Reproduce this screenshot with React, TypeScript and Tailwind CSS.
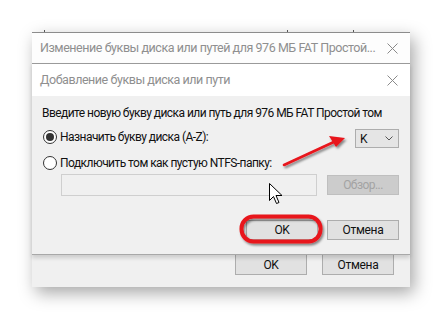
import React from "react";

const font = { fontFamily: 'Roboto, "Noto Sans", sans-serif' };

function CloseX() {
  return (
    <svg width="11" height="11" viewBox="0 0 11 11" className="shrink-0">
      <path d="M0.5 0.5 L10.5 10.5 M10.5 0.5 L0.5 10.5" stroke="#8a8a8a" strokeWidth="1" />
    </svg>
  );
}

function Radio({ checked }: { checked?: boolean }) {
  return (
    <div className="w-[14px] h-[14px] rounded-full border border-[#333] bg-white flex items-center justify-center shrink-0">
      {checked && <div className="w-[8px] h-[8px] rounded-full bg-[#333]" />}
    </div>
  );
}

function Btn({ children, className = "" }: { children: React.ReactNode; className?: string }) {
  return (
    <div
      className={
        "w-[72px] h-[20px] bg-[#e1e1e1] border border-[#adadad] flex items-center justify-center text-[12px] text-[#111] tracking-[-0.3px] " +
        className
      }
    >
      {children}
    </div>
  );
}

export default function App() {
  return (
    <div className="relative w-[442px] h-[319px] bg-white overflow-hidden" style={font}>
      <div className="pt-[32px] pl-[32px]">
        <div className="relative w-[378px] h-[255px] bg-[#f0f0f0] border-t border-[#8c8c8c] shadow-[4px_6px_16px_rgba(0,0,0,0.35)] flex flex-col">
          <div className="absolute -top-[3px] left-[12px] w-px h-[2px] bg-[#555]" />
          <div className="absolute -top-[3px] left-[255px] w-px h-[2px] bg-[#555]" />
          <div className="absolute -top-[3px] left-[321px] w-px h-[2px] bg-[#555]" />
          <div className="h-[30px] bg-[#fdfdfd] flex items-center pl-[8px] pr-[12px] text-[12.5px] tracking-[-0.45px] text-[#8f8f8f]">
            <span className="flex-1 whitespace-nowrap">Изменение буквы диска или путей для 976 МБ FAT Простой...</span>
            <CloseX />
          </div>
          <div className="flex flex-col border-t border-[#9a9a9a] border-b border-b-[#a8a8a8] shadow-[0_3px_4px_rgba(0,0,0,0.15)] relative z-10">
            <div className="h-[32px] bg-white flex items-center pl-[8px] pr-[12px] text-[12.5px] tracking-[-0.45px] text-[#8f8f8f]">
              <span className="flex-1">Добавление буквы диска или пути</span>
              <CloseX />
            </div>
            <div className="h-[158px] bg-[#f0f0f0] flex flex-col pl-[10px] pr-[11px] pt-[9px] text-[12px] tracking-[-0.55px] text-[#111]">
              <div className="h-[17px] leading-[17px] whitespace-nowrap">
                Введите новую букву диска или путь для 976 МБ FAT Простой том
              </div>
              <div className="mt-[7px] flex items-center justify-between h-[19px]">
                <div className="flex items-center gap-[3px] pl-[1px] -mt-[3px]">
                  <Radio checked />
                  <span>Назначить букву диска (A-Z):</span>
                </div>
                <div className="w-[44px] h-[19px] bg-[#e5e5e5] border border-[#adadad] flex items-center justify-between pl-[4px] pr-[5px]">
                  <span className="text-[12px]">K</span>
                  <svg width="8" height="5" viewBox="0 0 8 5">
                    <path d="M0.5 0.5 L4 4 L7.5 0.5" fill="none" stroke="#555" strokeWidth="1" />
                  </svg>
                </div>
              </div>
              <div className="mt-[6px] flex items-center gap-[3px] pl-[1px] h-[18px]">
                <Radio />
                <span>Подключить том как пустую NTFS-папку:</span>
              </div>
              <div className="mt-[2px] flex items-center justify-between pl-[19px]">
                <div className="w-[256px] h-[22px] bg-[#f0f0f0] border border-[#cfcfcf]" />
                <div className="w-[72px] h-[20px] bg-[#cccccc] border border-[#bfbfbf] flex items-center justify-center text-[#a3a3a3]">
                  Обзор...
                </div>
              </div>
              <div className="mt-[24px] flex justify-end gap-[9px]">
                <Btn>OK</Btn>
                <Btn>Отмена</Btn>
              </div>
            </div>
          </div>
          <div className="flex justify-end gap-[15px] pr-[16px]">
            <Btn className="h-[19px] border-t-0">OK</Btn>
            <Btn className="h-[19px] border-t-0">Отмена</Btn>
          </div>
        </div>
      </div>

      <svg className="absolute left-0 top-0 z-50 pointer-events-none" width="442" height="319" viewBox="0 0 442 319">
        <defs>
          <filter id="sh" x="-20%" y="-20%" width="140%" height="140%">
            <feDropShadow dx="1.5" dy="2" stdDeviation="1.2" floodColor="#000" floodOpacity="0.45" />
          </filter>
        </defs>
        <g filter="url(#sh)">
          <path d="M284 165 L336 141" stroke="#e8141c" strokeWidth="2.6" strokeLinecap="round" />
          <path d="M345 138 L329 136 L336 147 Z" fill="#e8141c" />
          <rect x="241.5" y="216.5" width="79" height="25" rx="12" fill="none" stroke="#e8141c" strokeWidth="4" />
        </g>
        <path
          d="M269.5 183.5 L269.5 200.5 L273.5 196.5 L276.5 203.5 L279 202.5 L276 195.5 L282 195.5 Z"
          fill="#fff"
          stroke="#000"
          strokeWidth="1"
          strokeLinejoin="miter"
        />
      </svg>
    </div>
  );
}
